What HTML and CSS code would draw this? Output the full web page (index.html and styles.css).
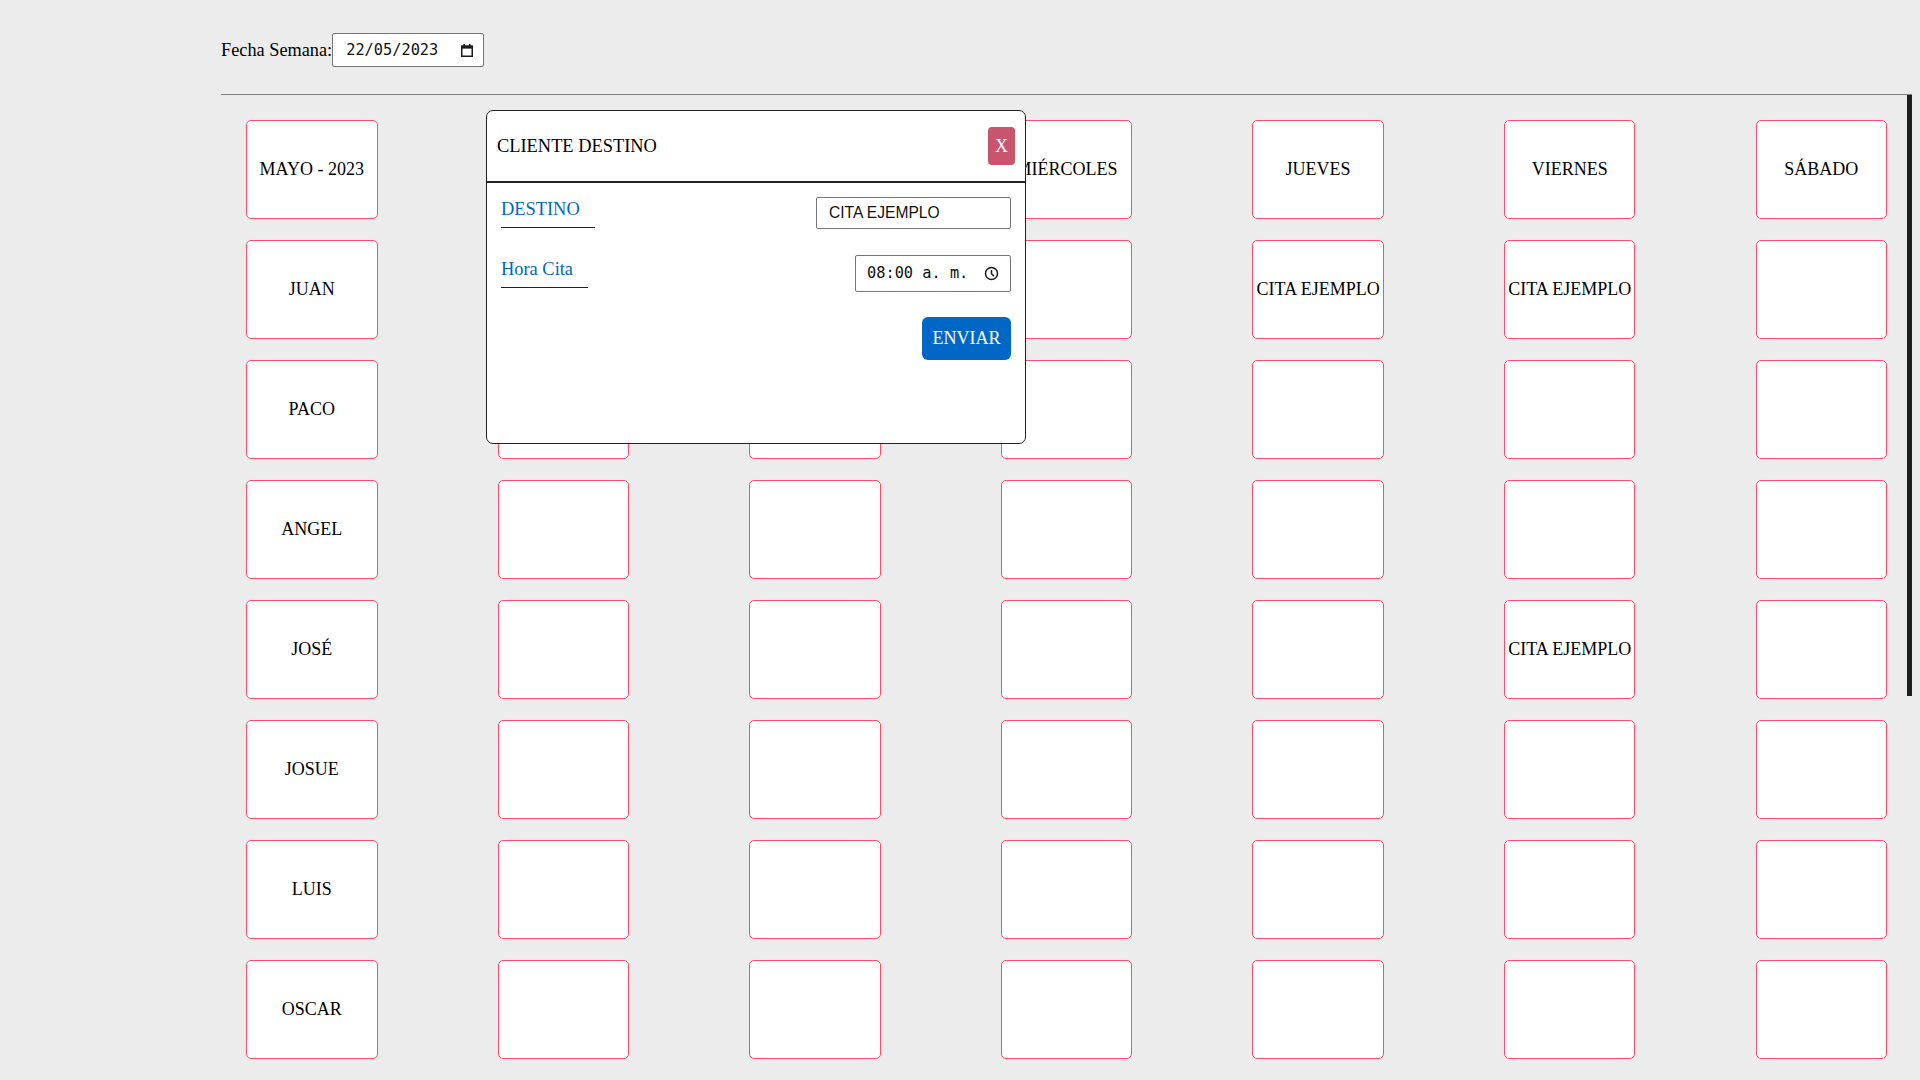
FILE: index.html
```html
<!DOCTYPE html>
<html lang="es">
<head>
<meta charset="utf-8">
<title>Agenda semanal</title>
<link rel="stylesheet" href="styles.css">
</head>
<body>
<div class="top">
  <span class="top-label">Fecha Semana:</span>
  <div class="field date-field">
    <span class="mono">22/05/2023</span>
    <svg class="cal-icon" width="12" height="13" viewBox="0 0 12 13" aria-hidden="true">
      <rect x="0.75" y="2.25" width="10.5" height="10" fill="none" stroke="#1a1a1a" stroke-width="1.5"/>
      <rect x="0" y="1.6" width="12" height="3" fill="#1a1a1a"/>
      <rect x="2.4" y="0" width="1.6" height="2.5" fill="#1a1a1a"/>
      <rect x="8" y="0" width="1.6" height="2.5" fill="#1a1a1a"/>
    </svg>
  </div>
</div>

<div class="board-wrap">
  <div class="board">
    <div class="grid">
      <div class="cell">MAYO - 2023</div>
      <div class="cell">LUNES</div>
      <div class="cell">MARTES</div>
      <div class="cell">MIÉRCOLES</div>
      <div class="cell">JUEVES</div>
      <div class="cell">VIERNES</div>
      <div class="cell">SÁBADO</div>

      <div class="cell">JUAN</div>
      <div class="cell"></div>
      <div class="cell"></div>
      <div class="cell"></div>
      <div class="cell">CITA EJEMPLO</div>
      <div class="cell">CITA EJEMPLO</div>
      <div class="cell"></div>

      <div class="cell">PACO</div>
      <div class="cell"></div><div class="cell"></div><div class="cell"></div><div class="cell"></div><div class="cell"></div><div class="cell"></div>

      <div class="cell">ANGEL</div>
      <div class="cell"></div><div class="cell"></div><div class="cell"></div><div class="cell"></div><div class="cell"></div><div class="cell"></div>

      <div class="cell">JOSÉ</div>
      <div class="cell"></div><div class="cell"></div><div class="cell"></div><div class="cell"></div>
      <div class="cell">CITA EJEMPLO</div>
      <div class="cell"></div>

      <div class="cell">JOSUE</div>
      <div class="cell"></div><div class="cell"></div><div class="cell"></div><div class="cell"></div><div class="cell"></div><div class="cell"></div>

      <div class="cell">LUIS</div>
      <div class="cell"></div><div class="cell"></div><div class="cell"></div><div class="cell"></div><div class="cell"></div><div class="cell"></div>

      <div class="cell">OSCAR</div>
      <div class="cell"></div><div class="cell"></div><div class="cell"></div><div class="cell"></div><div class="cell"></div><div class="cell"></div>

      <div class="cell"></div><div class="cell"></div><div class="cell"></div><div class="cell"></div><div class="cell"></div><div class="cell"></div><div class="cell"></div>
      <div class="cell"></div><div class="cell"></div><div class="cell"></div><div class="cell"></div><div class="cell"></div><div class="cell"></div><div class="cell"></div>
      <div class="cell"></div><div class="cell"></div><div class="cell"></div><div class="cell"></div><div class="cell"></div><div class="cell"></div><div class="cell"></div>
      <div class="cell"></div><div class="cell"></div><div class="cell"></div><div class="cell"></div><div class="cell"></div><div class="cell"></div><div class="cell"></div>
      <div class="cell"></div><div class="cell"></div><div class="cell"></div><div class="cell"></div><div class="cell"></div><div class="cell"></div><div class="cell"></div>
    </div>
  </div>
  <div class="scroll-thumb"></div>
</div>

<div class="modal">
  <div class="modal-head">
    <span class="modal-title">CLIENTE DESTINO</span>
    <button class="close-btn" type="button">X</button>
  </div>
  <div class="modal-body">
    <div class="form-row row-first">
      <span class="form-label">DESTINO</span>
      <div class="field text-field">CITA EJEMPLO</div>
    </div>
    <div class="form-row row-second">
      <span class="form-label">Hora Cita</span>
      <div class="field time-field">
        <span class="mono">08:00 a. m.</span>
        <svg class="clock-icon" width="15" height="15" viewBox="0 0 16 16" aria-hidden="true">
          <circle cx="8" cy="8" r="6.4" fill="none" stroke="#1a1a1a" stroke-width="1.6"/>
          <path d="M8 4.2 V8.2 L10.7 10.9" fill="none" stroke="#1a1a1a" stroke-width="1.6"/>
        </svg>
      </div>
    </div>
    <button class="send-btn" type="button">ENVIAR</button>
  </div>
</div>
</body>
</html>
```

FILE: styles.css
```css
html, body {
  height: 100%;
}

body {
  margin: 8px;
  background: #ececec;
  font-family: "Liberation Serif", "Times New Roman", serif;
  font-size: 18px;
  color: #000;
  overflow: hidden;
}

.top {
  display: flex;
  align-items: center;
  height: 34px;
  margin: 25px 0 27px 213px;
}

.top-label {
  font-size: 18.3px;
}

.field {
  box-sizing: border-box;
  background: #fff;
  border: 1px solid #767676;
  border-radius: 2px;
  display: flex;
  align-items: center;
}

.mono {
  font-family: "DejaVu Sans Mono", "Liberation Mono", monospace;
  font-size: 15.3px;
  color: #111;
  white-space: pre;
}

.date-field {
  width: 152px;
  height: 34px;
  padding: 0 10px 0 13px;
  justify-content: space-between;
}

.cal-icon {
  display: block;
}

.board-wrap {
  position: relative;
  margin-left: 213px;
  width: 1692px;
}

.board {
  box-sizing: border-box;
  width: 100%;
  height: 978px;
  border-top: 1px solid #808080;
  overflow-y: auto;
  overflow-x: hidden;
  scrollbar-width: none;
}

.board::-webkit-scrollbar {
  display: none;
}

.scroll-thumb {
  position: absolute;
  top: 1px;
  right: 0;
  width: 6px;
  height: 601px;
  background: #1e1e1e;
}

.grid {
  display: grid;
  grid-template-columns: repeat(7, 131.5px);
  grid-auto-rows: 98.5px;
  column-gap: 120.1px;
  row-gap: 21.5px;
  padding: 25px 0 25px 25px;
}

.cell {
  box-sizing: border-box;
  background: #fff;
  border: 1px solid #ff4d6e;
  border-radius: 5px;
  display: flex;
  align-items: center;
  justify-content: center;
  font-size: 18px;
  white-space: nowrap;
}

.modal {
  position: absolute;
  left: 486px;
  top: 110px;
  box-sizing: border-box;
  width: 540px;
  height: 334px;
  background: #fff;
  border: 1px solid #222;
  border-radius: 7px;
}

.modal-head {
  display: flex;
  align-items: center;
  justify-content: space-between;
  height: 70px;
  padding: 0 10px;
  border-bottom: 2px solid #222;
}

.modal-title {
  font-size: 18.4px;
}

.close-btn {
  font-family: "Liberation Serif", "Times New Roman", serif;
  font-size: 18px;
  line-height: normal;
  color: #fff;
  background: #c9546d;
  border: none;
  border-radius: 4px;
  padding: 8.5px 7px;
  margin: 0;
}

.modal-body {
  display: flex;
  flex-direction: column;
  padding: 14px;
}

.form-row {
  display: flex;
  align-items: center;
  justify-content: space-between;
}

.row-first {
  margin-bottom: 26px;
}

.row-second {
  margin-bottom: 25px;
}

.form-label {
  font-size: 18.4px;
  color: #0066c6;
  padding: 0 15px 7px 0;
  border-bottom: 1px solid #222;
}

.text-field {
  width: 195px;
  height: 32px;
  padding: 0 12px;
  font-family: "Liberation Sans", Arial, sans-serif;
  font-size: 15.6px;
  color: #111;
}

.time-field {
  width: 156px;
  height: 36.5px;
  padding: 0 11px 0 11px;
  justify-content: space-between;
}

.clock-icon {
  display: block;
}

.send-btn {
  align-self: flex-end;
  font-family: "Liberation Serif", "Times New Roman", serif;
  font-size: 18px;
  line-height: normal;
  color: #fff;
  background: #0067c5;
  border: none;
  border-radius: 6px;
  padding: 11px 10.5px;
  margin: 0;
}
```
